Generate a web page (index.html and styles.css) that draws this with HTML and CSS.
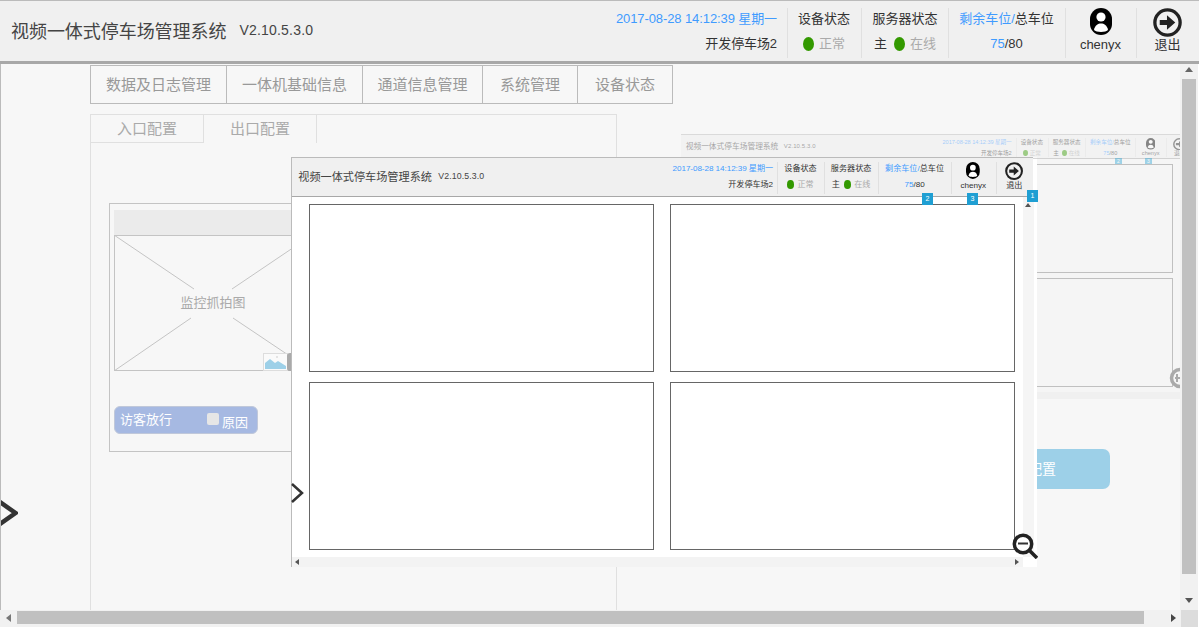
FILE: index.html
```html
<!DOCTYPE html>
<html lang="zh-CN">
<head>
<meta charset="utf-8">
<title>视频一体式停车场管理系统</title>
<link rel="stylesheet" href="styles.css">
</head>
<body>
<div class="page">
  <header class="appbar">
    <div class="brand"><span class="brand-name">视频一体式停车场管理系统</span><span class="brand-ver">V2.10.5.3.0</span></div>
    <div class="info"><div class="blue">2017-08-28 14:12:39 星期一</div><div>开发停车场2</div></div>
    <div class="cell c1"><div>设备状态</div><div class="muted"><i class="dot"></i>正常</div></div>
    <div class="cell c2"><div>服务器状态</div><div><span class="zhu">主</span><i class="dot"></i><span class="muted">在线</span></div></div>
    <div class="cell c3"><div><span class="blue">剩余车位/</span>总车位</div><div><span class="blue">75</span>/80</div></div>
    <div class="cell c4"><svg class="ico-user" viewBox="0 0 22 27"><rect width="22" height="27" rx="11" fill="#000"/><circle cx="11" cy="9" r="4.6" fill="#fff"/><path d="M4 22c1-5 4-6.500 7-6.500s6 1.500 7 6.500c-2 2.500-12 2.500-14 0z" fill="#fff"/></svg><div>chenyx</div></div>
    <div class="cell c5"><svg class="ico-exit" viewBox="0 0 28 28"><circle cx="14" cy="14" r="12.200" fill="none" stroke="#222" stroke-width="3.200"/><path d="M6.500 11.500h7V7l8 7-8 7v-4.500h-7z" fill="#222"/></svg><div>退出</div></div>
  </header>

  <div class="middle">
    <main class="canvas">
      <nav class="tabs">
        <a class="tab t1">数据及日志管理</a><a class="tab t2">一体机基础信息</a><a class="tab t3">通道信息管理</a><a class="tab t4">系统管理</a><a class="tab t5">设备状态</a>
      </nav>
      <section class="panel">
        <div class="subtabs"><a class="subtab off">入口配置</a><a class="subtab on">出口配置</a></div>
        <div class="card">
          <div class="card-head"></div>
          <div class="shot">
            <svg class="shot-x" viewBox="0 0 198 136"><path d="M0 0L80 54M0 136L77 83M118 54L198 0M119 83L198 136" stroke="#c4c4c4" fill="none"/></svg>
            <span class="shot-label">监控抓拍图</span>
          </div>
          <div class="visitor"><span class="visitor-name">访客放行</span><i class="check"></i><span class="visitor-why">原因</span></div>
        </div>
      </section>

      <svg class="pic-icon" viewBox="0 0 25 18"><rect x=".5" y=".5" width="24" height="17" fill="#fafafa" stroke="#ddd"/><path d="M2 16V10l5-4 5 4 3-2 8 5v3z" fill="#9dd0e8"/><circle cx="14" cy="4" r="1" fill="#ddd"/></svg>
      <i class="pic-pill"></i>

      <a class="save-btn">配置</a>

      <div class="ghost">
        <header class="appbar appbar-ghost">
          <div class="brand"><span class="brand-name">视频一体式停车场管理系统</span><span class="brand-ver">V2.10.5.3.0</span></div>
          <div class="info"><div class="blue">2017-08-28 14:12:39 星期一</div><div>开发停车场2</div></div>
          <div class="cell c1"><div>设备状态</div><div class="muted"><i class="dot"></i>正常</div></div>
          <div class="cell c2"><div>服务器状态</div><div><span class="zhu">主</span><i class="dot"></i><span class="muted">在线</span></div></div>
          <div class="cell c3"><div><span class="blue">剩余车位/</span>总车位</div><div><span class="blue">75</span>/80</div></div>
          <div class="cell c4"><svg class="ico-user" viewBox="0 0 22 27"><rect width="22" height="27" rx="11" fill="#000"/><circle cx="11" cy="9" r="4.600" fill="#fff"/><path d="M4 22c1-5 4-6.500 7-6.500s6 1.500 7 6.500c-2 2.500-12 2.500-14 0z" fill="#fff"/></svg><div>chenyx</div></div>
          <div class="cell c5"><svg class="ico-exit" viewBox="0 0 28 28"><circle cx="14" cy="14" r="12.200" fill="none" stroke="#222" stroke-width="3.200"/><path d="M6.500 11.500h7V7l8 7-8 7v-4.500h-7z" fill="#222"/></svg><div>退出</div></div>
        </header>
        <div class="ghost-grid"><div class="ghost-box"></div><div class="ghost-box"></div><div class="ghost-box"></div><div class="ghost-box"></div></div>
        <div class="ghost-strip"></div>
        <span class="badge ghost-b2">2</span><span class="badge ghost-b3">3</span>
        <svg class="ghost-zoom" viewBox="0 0 22 22"><circle cx="11" cy="11" r="8.500" fill="none" stroke="#aaa" stroke-width="3.500"/><path d="M6 11h10M8 7v8" stroke="#aaa" stroke-width="2"/></svg>
      </div>

      <div class="preview">
        <header class="appbar appbar-mini">
          <div class="brand"><span class="brand-name">视频一体式停车场管理系统</span><span class="brand-ver">V2.10.5.3.0</span></div>
          <div class="info"><div class="blue">2017-08-28 14:12:39 星期一</div><div>开发停车场2</div></div>
          <div class="cell c1"><div>设备状态</div><div class="muted"><i class="dot"></i>正常</div></div>
          <div class="cell c2"><div>服务器状态</div><div><span class="zhu">主</span><i class="dot"></i><span class="muted">在线</span></div></div>
          <div class="cell c3"><div><span class="blue">剩余车位/</span>总车位</div><div><span class="blue">75</span>/80</div></div>
          <div class="cell c4"><svg class="ico-user" viewBox="0 0 22 27"><rect width="22" height="27" rx="11" fill="#000"/><circle cx="11" cy="9" r="4.600" fill="#fff"/><path d="M4 22c1-5 4-6.500 7-6.500s6 1.500 7 6.500c-2 2.500-12 2.500-14 0z" fill="#fff"/></svg><div>chenyx</div></div>
          <div class="cell c5"><svg class="ico-exit" viewBox="0 0 28 28"><circle cx="14" cy="14" r="12.200" fill="none" stroke="#222" stroke-width="3.200"/><path d="M6.500 11.500h7V7l8 7-8 7v-4.500h-7z" fill="#222"/></svg><div>退出</div></div>
        </header>
        <div class="preview-body">
          <div class="preview-grid"><div class="pbox"></div><div class="pbox"></div><div class="pbox"></div><div class="pbox"></div></div>
          <div class="preview-vscroll"><i class="tri tri-up"></i></div>
        </div>
        <div class="preview-hscroll"><i class="tri tri-left"></i><i class="tri tri-right"></i></div>
        <span class="badge b1">1</span><span class="badge b2">2</span><span class="badge b3">3</span>
      </div>

      <svg class="chev-big" viewBox="0 0 18 30"><path d="M-3 2L15.500 15L-3 28" fill="none" stroke="#333" stroke-width="4.500"/></svg>
      <svg class="chev-small" viewBox="0 0 13 20"><path d="M1 1L11 10L1 19" fill="none" stroke="#333" stroke-width="2.500"/></svg>
      <svg class="mag" viewBox="0 0 26 26"><circle cx="11" cy="11" r="8.700" fill="#fff" stroke="#222" stroke-width="3.500"/><path d="M6 10.500h10" stroke="#333" stroke-width="2"/><path d="M17.500 17.500L25 25" stroke="#222" stroke-width="3.500"/></svg>
    </main>
    <aside class="vscroll"><i class="tri tri-up lg"></i><div class="vthumb"></div><i class="tri tri-down lg"></i></aside>
  </div>

  <footer class="hscroll">
    <div class="htrack"><i class="tri tri-left lg"></i><div class="hthumb"></div><i class="tri tri-right lg"></i></div>
    <div class="corner"></div>
  </footer>
</div>
</body>
</html>
```
FILE: styles.css
```css
* { box-sizing: border-box; }
html, body { margin: 0; height: 100%; overflow: hidden; background: #fff; }
body { font-family: "Liberation Sans", "Noto Sans CJK SC", sans-serif; color: #333; }
.page { width: 1199px; height: 627px; display: flex; flex-direction: column; overflow: hidden; }
i { display: block; }

/* top bar, reused at smaller scale for the previews */
.appbar { flex: none; height: 64px; display: flex; align-items: stretch; background: #f0f0f0; border-top: 1px solid #bbb; border-bottom: 3px solid #a8a8a8; font-size: 13px; color: #333; position: relative; z-index: 3; }
.appbar-mini { zoom: 0.625; z-index: 1; margin-right: 6.4px; }
.appbar-mini .c5 { width: 60px; }
.appbar-mini .brand { padding-left: 10px; }
.appbar-mini .brand-name { font-size: 17.9px; }
.appbar-mini .brand-ver { margin-left: 10px; }
.appbar-mini .info { padding-right: 7px; }
.appbar-ghost { zoom: 0.43; z-index: 1; opacity: 0.45; height: 58px; margin-right: -28px; }
.brand { flex: 1; display: flex; align-items: center; padding: 0 0 3px 11px; }
.brand-name { font-size: 18px; color: #444; letter-spacing: -0.05px; }
.brand-ver { font-size: 14px; margin-left: 13px; color: #444; letter-spacing: 0.2px; }
.info { width: 172px; padding: 10px 10px 0 0; text-align: right; line-height: 16px; white-space: nowrap; direction: rtl; }
.info > div { direction: ltr; letter-spacing: -0.1px; }
.info > div + div { margin-top: 9px; }
.blue { color: #3f9bff; }
.muted { color: #aaa; }
.cell { position: relative; padding-top: 10px; line-height: 16px; text-align: center; white-space: nowrap; }
.cell::before { content: ""; position: absolute; left: 0; top: 7px; bottom: 3px; width: 1px; background: #e0e0e0; }
.cell > div + div { margin-top: 9px; }
.c1 { width: 74px; }
.c2 { width: 87px; padding-left: 1px; }
.c3 { width: 117px; }
.c4 { width: 71px; padding-top: 7px; }
.c5 { width: 63px; padding-top: 7px; }
.c4 > div + div, .c5 > div + div { margin-top: -1px; }
.cell .dot { display: inline-block; width: 11px; height: 14px; border-radius: 50%; background: #339900; vertical-align: -3px; margin-right: 5px; }
.zhu { margin-right: 7px; }
.ico-user { display: block; width: 22px; height: 27px; margin: 0 auto 2px; }
.ico-exit { display: block; width: 29px; height: 29px; margin: 0 auto; }

.middle { flex: 1; min-height: 0; display: flex; }
.canvas { flex: none; width: 1180px; position: relative; background: #f7f7f7; border-left: 1px solid #bbb; overflow: hidden; padding-top: 1px; }

/* tabs */
.tabs { display: flex; margin-left: 89px; height: 39px; }
.tab { height: 39px; line-height: 38px; text-align: center; font-size: 15px; color: #999; border: 1px solid #bbb; border-left-width: 0; }
.t1 { width: 137px; border-left-width: 1px; }
.t2 { width: 136px; }
.t3 { width: 120px; }
.t4 { width: 95px; }
.t5 { width: 95px; }

.panel { margin: 10px 0 0 89px; width: 527px; height: 496px; border: 1px solid #e0e0e0; border-bottom: 0; }
.subtabs { display: flex; height: 28px; }
.subtab { width: 113px; line-height: 27px; text-align: center; font-size: 15px; color: #aaa; border-right: 1px solid #e0e0e0; }
.subtab.off { border-bottom: 1px solid #e0e0e0; }
.subtab.on { background: #f7f7f7; }

.card { margin: 60px 0 0 18px; width: 480px; height: 249px; padding: 6px 4px; border: 1px solid #c4c4c4; }
.card-head { height: 25px; background: #ebebeb; }
.shot { position: relative; width: 198px; height: 136px; border: 1px solid #c4c4c4; }
.shot-x { position: absolute; inset: -1px; width: 198px; height: 136px; }
.shot-label { position: absolute; left: 0; right: 0; top: 58px; text-align: center; font-size: 13px; line-height: 18px; color: #aaa; }
.visitor { position: relative; margin-top: 35px; width: 144px; height: 28px; display: flex; padding-left: 5px; background: #a6b9e2; border: 1px solid #c0c8da; border-radius: 6px; color: #fff; font-size: 13px; line-height: 25px; }
.check { position: absolute; left: 92px; top: 6px; width: 12px; height: 12px; background: #e6e6e6; border-radius: 2px; }
.visitor-why { position: absolute; left: 107px; top: 6px; font-size: 13px; line-height: 20px; }

/* overlays on the canvas */
.pic-icon { position: absolute; left: 262px; top: 289px; width: 25px; height: 18px; }
.pic-pill { position: absolute; left: 286px; top: 289px; width: 6px; height: 18px; background: #aaa; border-radius: 3px 0 0 3px; }
.save-btn { position: absolute; left: 900px; top: 385px; width: 209px; height: 40px; border-radius: 7px; background: #9dd0e8; color: #fff; font-size: 14px; line-height: 40px; padding-left: 127px; }

.ghost { position: absolute; left: 680px; top: 70px; width: 500px; height: 265px; background: #f5f5f5; display: flex; flex-direction: column; overflow: hidden; }
.ghost-grid { flex: 1; display: grid; grid-template-columns: 238px 238px; grid-template-rows: 109px 109px; gap: 5px 7px; justify-content: end; padding: 5px 8px 0 0; }
.ghost-box { border: 1px solid #c0c0c0; }
.ghost-strip { flex: none; height: 7px; background: #f0f0f0; }
.ghost-zoom { position: absolute; left: 488px; top: 233px; width: 22px; height: 22px; }

.preview { position: absolute; left: 290px; top: 93px; width: 746px; height: 410px; display: flex; flex-direction: column; background: #fff; border-left: 1px solid #bbb; }
.preview-body { flex: 1; min-height: 0; display: flex; }
.preview-grid { flex: none; width: 731px; display: grid; grid-template-columns: 345px 345px; grid-template-rows: 168px 168px; gap: 10px 16px; padding: 7px 0 0 17px; }
.pbox { border: 1px solid #666; }
.preview-vscroll { flex: none; width: 11px; background: #f5f5f5; position: relative; }
.preview-hscroll { flex: none; width: 731px; height: 10px; background: #f3f3f3; position: relative; }

.badge { position: absolute; z-index: 2; width: 11px; height: 12px; background: #1f9fd3; color: #fff; font-size: 7px; line-height: 12px; text-align: center; }
.b1 { left: 735px; top: 33px; }
.b2 { left: 630px; top: 36px; }
.b3 { left: 675px; top: 36px; }
.badge.ghost-b2, .badge.ghost-b3 { opacity: 0.4; top: 24px; width: 7px; height: 6px; font-size: 5px; line-height: 6px; }
.badge.ghost-b2 { left: 434px; }
.badge.ghost-b3 { left: 464px; }

.tri { position: absolute; width: 0; height: 0; border-style: solid; border-color: transparent; }
.tri-up { left: 2px; top: 6px; border-width: 0 3px 4px; border-bottom-color: #555; }
.tri-left { left: 3px; top: 2px; border-width: 3px 4px 3px 0; border-right-color: #555; }
.tri-right { right: 4px; top: 2px; border-width: 3px 0 3px 4px; border-left-color: #555; }

.chev-big { position: absolute; left: -1px; top: 434px; width: 18px; height: 30px; }
.chev-small { position: absolute; left: 290px; top: 419px; width: 13px; height: 20px; }
.mag { position: absolute; left: 1011px; top: 469px; width: 26px; height: 26px; }

/* page scrollbars */
.vscroll { flex: none; width: 18px; position: relative; background: #f1f1f1; padding-top: 15px; }
.vthumb { margin: 0 2px 0 2px; height: 495px; background: #c0c0c0; }
.tri-up.lg { left: 5px; top: 3px; border-width: 0 4px 5px; border-bottom-color: #666; }
.tri-down { left: 5px; bottom: 7px; border-width: 5px 4px 0; border-top-color: #555; }

.hscroll { flex: none; height: 17px; display: flex; background: #fff; }
.htrack { flex: none; width: 1181px; position: relative; background: #f1f1f1; padding: 1px 0 3px 17px; }
.hthumb { width: 1127px; height: 13px; background: #c0c0c0; }
.tri-left.lg { left: 6px; top: 4px; border-width: 4px 5px 4px 0; border-right-color: #777; }
.tri-right.lg { right: 5px; top: 4px; border-width: 4px 0 4px 5px; border-left-color: #444; }
.corner { width: 17px; background: #dcdcdc; }
```
